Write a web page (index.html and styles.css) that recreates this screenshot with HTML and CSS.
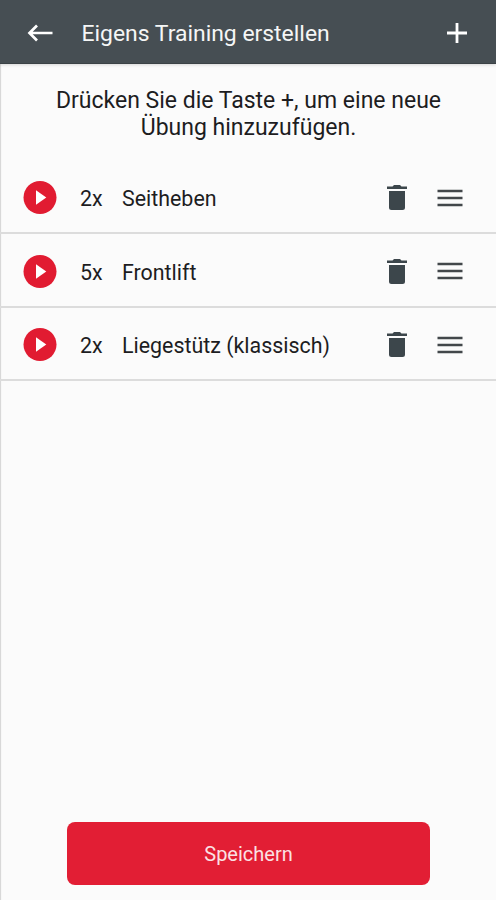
FILE: index.html
```html
<!DOCTYPE html>
<html lang="de">
<head>
<meta charset="utf-8">
<meta name="viewport" content="width=device-width, initial-scale=1">
<title>Eigens Training erstellen</title>
<link rel="stylesheet" href="styles.css">
</head>
<body>
<svg class="defs" width="0" height="0" aria-hidden="true">
  <symbol id="play" viewBox="0 0 34 33"><circle cx="17" cy="16.5" r="16.5" fill="#e11b31"/><path d="M13 9.3v14.4l10.3-7.2z" fill="#fff"/></symbol>
  <symbol id="trash" viewBox="0 0 20 25"><path d="M2 6h16v16.500q0 2.500-2.500 2.500h-11Q2 25 2 22.500zM0 1.500h5.500L7 0h6l1.500 1.500H20V4H0z" fill="#3c464b"/></symbol>
  <symbol id="drag" viewBox="0 0 26 18"><path d="M.5 2h25M.5 9h25M.5 16h25" stroke="#42474a" stroke-width="2.500"/></symbol>
</svg>
<div class="screen">
  <header class="bar">
    <svg class="back" viewBox="0 0 26 18"><path d="M25.500 9H2.500M10 1.500L2.500 9l7.500 7.500" fill="none" stroke="#fff" stroke-width="2.700"/></svg>
    <h1 class="title">Eigens Training erstellen</h1>
    <svg class="add" viewBox="0 0 20 20"><path d="M10 0v20M0 10h20" stroke="#fff" stroke-width="2.800"/></svg>
  </header>
  <p class="hint">Drücken Sie die Taste +, um eine neue<br>Übung hinzuzufügen.</p>
  <ul class="list">
    <li class="row"><svg class="play"><use href="#play"/></svg><span class="count">2x</span><span class="name">Seitheben</span><svg class="trash"><use href="#trash"/></svg><svg class="drag"><use href="#drag"/></svg></li>
    <li class="row"><svg class="play"><use href="#play"/></svg><span class="count">5x</span><span class="name">Frontlift</span><svg class="trash"><use href="#trash"/></svg><svg class="drag"><use href="#drag"/></svg></li>
    <li class="row"><svg class="play"><use href="#play"/></svg><span class="count">2x</span><span class="name">Liegestütz (klassisch)</span><svg class="trash"><use href="#trash"/></svg><svg class="drag"><use href="#drag"/></svg></li>
  </ul>
  <button class="save">Speichern</button>
</div>
</body>
</html>
```
FILE: styles.css
```css
* { box-sizing: border-box; }
body { margin: 0; font-family: Roboto, "Liberation Sans", sans-serif; color: #1d1d1f; }
svg { display: block; flex: none; }
.defs { position: absolute; }
.screen { display: flex; flex-direction: column; height: 900px; background: #fbfbfb; box-shadow: inset 2px 0 1px -1px #d4d4d4; }
.bar { display: flex; align-items: center; height: 64px; padding: 3px 29px 0 27px; background: #464e53; border-bottom: 1px solid #3b4246; box-shadow: 0 1px 3px rgba(0, 0, 0, .15); }
.back { width: 26px; height: 18px; }
.title { flex: 1; margin: 2px 0 0 28.500px; font-size: 22.920px; font-weight: 400; line-height: 30px; color: #f5f6f6; }
.add { width: 20px; height: 20px; }
.hint { margin: 23px 0 0; padding-left: 1px; height: 73.500px; text-align: center; font-size: 23px; line-height: 27px; }
.list { margin: 0; padding: 0; list-style: none; }
.row { display: flex; align-items: center; height: 73.500px; padding: 3px 33px 0 23px; border-bottom: 2px solid #dcdcdc; font-size: 21.400px; line-height: 28px; }
.play { width: 34px; height: 33px; }
.count { width: 42px; margin: 3px 0 0 23px; }
.name { flex: 1; margin-top: 3px; }
.trash { width: 20px; height: 25px; margin-right: 30px; }
.drag { width: 26px; height: 18px; }
.save { width: 363px; height: 63px; margin: auto auto 15px 67px; padding: 0; border: 0; border-radius: 8px; background: #e21e34; color: #fbe1e3; font: 20px Roboto, "Liberation Sans", sans-serif; }
```
